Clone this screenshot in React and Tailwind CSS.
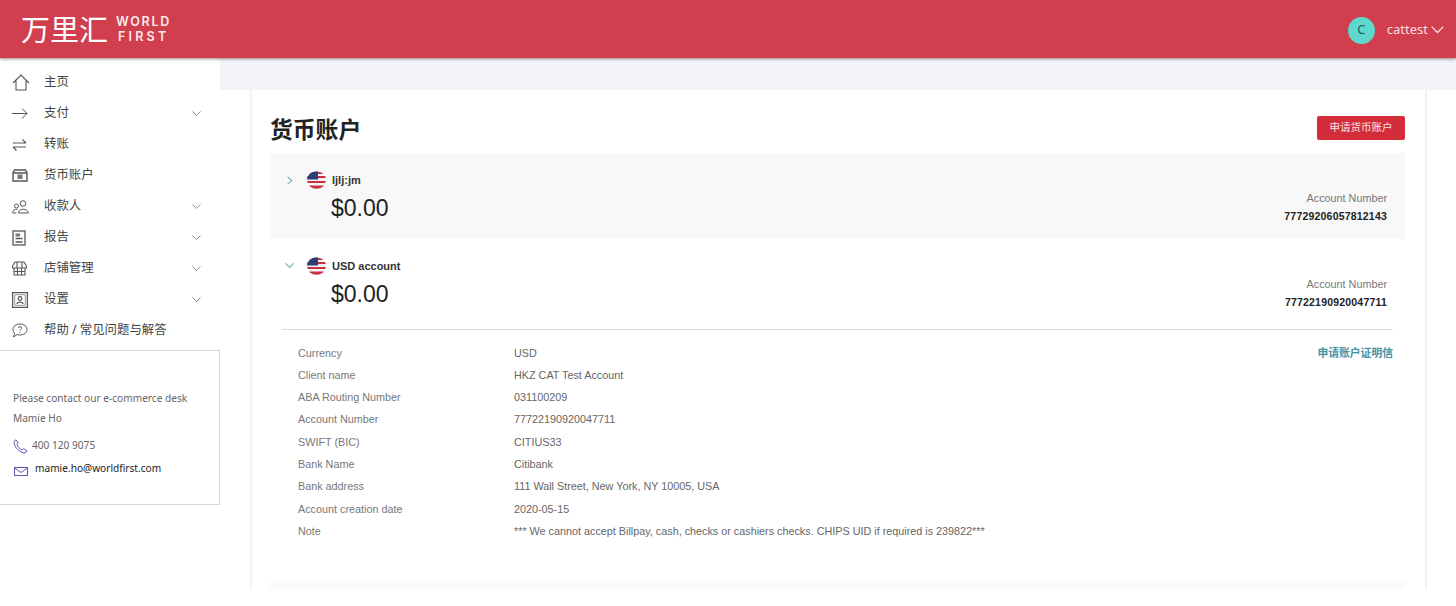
const cjk = "font-['Noto_Sans','Noto_Sans_CJK_SC',sans-serif]";
const arial = "font-['Liberation_Sans','Noto_Sans_CJK_SC',sans-serif]";

function Chevron({ w = 9, color = "#888", width = 1, right }) {
  return (
    <svg width={w} height={right ? w : w * 0.6} viewBox={right ? "0 0 10 10" : "0 0 10 6"} fill="none" stroke={color} strokeWidth={width}>
      <path d={right ? "M3 1 L7.5 5 L3 9" : "M0.5 0.5 L5 5 L9.5 0.5"} />
    </svg>
  );
}

function HomeIcon() {
  return (
    <svg width="18" height="17" viewBox="0 0 18 17" fill="none" stroke="#555" strokeWidth="1.1">
      <path d="M1 9 L9 1 L17 9 M4 7 V16 H14 V7" />
    </svg>
  );
}

function ArrowIcon() {
  return (
    <svg width="16" height="11" viewBox="0 0 16 11" fill="none" stroke="#555" strokeWidth="1">
      <path d="M0 5.5 H15 M10 0.5 L15 5.5 L10 10.5" />
    </svg>
  );
}

function TransferIcon() {
  return (
    <svg width="15" height="12" viewBox="0 0 15 12" fill="none" stroke="#555" strokeWidth="1.1">
      <path d="M1 4 H14 M10.5 0.5 L14 4 M14 8 H1 M4.5 11.5 L1 8" />
    </svg>
  );
}

function WalletIcon() {
  return (
    <svg width="16" height="13" viewBox="0 0 16 13" fill="none" stroke="#555" strokeWidth="1.4">
      <path d="M2.5 1 H13.5 L15 4 V12 H1 V4 Z M1 4 H15" />
      <rect x="5.5" y="5.5" width="5" height="4.5" fill="#777" stroke="none" />
    </svg>
  );
}

function PeopleIcon() {
  return (
    <svg width="17" height="14" viewBox="0 0 17 14" fill="none" stroke="#555" strokeWidth="1">
      <circle cx="11" cy="3.5" r="2.8" />
      <circle cx="4.5" cy="6" r="2" />
      <path d="M6.5 13 C6.5 8 15.8 8 16.3 13 Z" />
      <path d="M4.5 13 H0.7 C0.7 10.5 2.5 9 5.5 9.3" />
    </svg>
  );
}

function ReportIcon() {
  return (
    <svg width="14" height="16" viewBox="0 0 14 16" fill="none" stroke="#555" strokeWidth="1.3">
      <rect x="1" y="1" width="12" height="14" />
      <rect x="3.5" y="3.5" width="4.5" height="3" fill="#777" stroke="none" />
      <path d="M3.5 8.5 H10.5 M3.5 12 H10.5" />
    </svg>
  );
}

function StoreIcon() {
  return (
    <svg width="15" height="15" viewBox="0 0 15 15" fill="none" stroke="#555" strokeWidth="1.1">
      <path d="M3 1 H12 L14.5 5 V7 H0.5 V5 Z M5 1 V7 M10 1 V7 M2 7 V14 H13 V7 M2 10.5 H13 M5.5 7 V14 M9.5 7 V14" />
    </svg>
  );
}

function SettingsIcon() {
  return (
    <svg width="16" height="16" viewBox="0 0 16 16" fill="none" stroke="#555" strokeWidth="1.2">
      <rect x="0.6" y="0.6" width="14.8" height="14.8" />
      <rect x="2.8" y="2.8" width="10.4" height="10.4" strokeWidth="0.6" />
      <circle cx="8" cy="6.5" r="1.8" />
      <path d="M5 12 C5.5 9.5 10.5 9.5 11 12" />
    </svg>
  );
}

function HelpIcon() {
  return (
    <svg width="16" height="15" viewBox="0 0 16 15" fill="none" stroke="#555" strokeWidth="1">
      <path d="M8 1 C12 1 15 3.3 15 6.5 C15 9.7 12 12 8 12 C7 12 6 11.9 5.2 11.5 L1.5 14 L2.6 10.2 C1.6 9.2 1 8 1 6.5 C1 3.3 4 1 8 1 Z" />
      <path d="M6.5 5 C6.5 3.2 9.7 3.2 9.7 5 C9.7 6.2 8 6.2 8 7.6 M8 9 V9.8" />
    </svg>
  );
}

function PhoneIcon() {
  return (
    <svg width="15" height="15" viewBox="0 0 15 15" fill="none" stroke="#6a4fb5" strokeWidth="1">
      <path d="M1 2.5 L3 0.8 L5.2 4 L4 5.5 C4.6 7.5 6.6 9.8 9 11 L10.6 9.6 L14 11.8 L12.4 14 C7 14.2 0.8 8 1 2.5 Z" />
    </svg>
  );
}

function MailIcon() {
  return (
    <svg width="14" height="9" viewBox="0 0 14 9" fill="none" stroke="#6a4fb5" strokeWidth="1">
      <rect x="0.5" y="0.5" width="13" height="8" />
      <path d="M0.5 1 L7 5.5 L13.5 1" />
    </svg>
  );
}

function Flag() {
  return (
    <svg width="19" height="18" viewBox="0 0 19 18">
      <defs>
        <clipPath id="flag-circle">
          <ellipse cx="9.5" cy="9" rx="9.5" ry="8.8" />
        </clipPath>
      </defs>
      <g clipPath="url(#flag-circle)">
        <rect width="19" height="18" fill="#f4f4f6" />
        <rect y="1" width="19" height="2" fill="#c8313e" />
        <rect y="5" width="19" height="2" fill="#c8313e" />
        <rect y="10" width="19" height="2" fill="#c8313e" />
        <rect y="14.5" width="19" height="3.5" fill="#c8313e" />
        <rect width="11" height="8.5" fill="#2c3e78" />
      </g>
    </svg>
  );
}

const menu = [
  { label: "主页", icon: <HomeIcon /> },
  { label: "支付", icon: <ArrowIcon />, more: true },
  { label: "转账", icon: <TransferIcon /> },
  { label: "货币账户", icon: <WalletIcon /> },
  { label: "收款人", icon: <PeopleIcon />, more: true },
  { label: "报告", icon: <ReportIcon />, more: true },
  { label: "店铺管理", icon: <StoreIcon />, more: true },
  { label: "设置", icon: <SettingsIcon />, more: true },
  { label: "帮助 / 常见问题与解答", icon: <HelpIcon /> },
];

const details = [
  ["Currency", "USD"],
  ["Client name", "HKZ CAT Test Account"],
  ["ABA Routing Number", "031100209"],
  ["Account Number", "77722190920047711"],
  ["SWIFT (BIC)", "CITIUS33"],
  ["Bank Name", "Citibank"],
  ["Bank address", "111 Wall Street, New York, NY 10005, USA"],
  ["Account creation date", "2020-05-15"],
  ["Note", "*** We cannot accept Billpay, cash, checks or cashiers checks. CHIPS UID if required is 239822***"],
];

function AccountRow({ name, number, open, shaded }) {
  return (
    <div className={`flex h-[86px] justify-between pl-[13px] pr-[18px] pt-[17px] ${shaded ? "bg-[#f8f8f8]" : ""}`}>
      <div>
        <div className="flex h-[20px] items-center">
          <div className="flex w-[12px] justify-center">
            <Chevron color="#7fb0ba" width={1.3} right={!open} />
          </div>
          <div className="ml-[12px]">
            <Flag />
          </div>
          <span className="ml-[6px] text-[11px] font-bold text-[#333]">{name}</span>
        </div>
        <div className="ml-[48px] mt-[3px] text-[23px] leading-[30px] text-[#222]">$0.00</div>
      </div>
      <div className="pt-[20px] text-right">
        <div className="text-[10.8px] leading-[16px] text-[#777]">Account Number</div>
        <div className="mt-[0.5px] text-[10.5px] font-bold leading-[18px] tracking-[0.2px] text-[#222]">{number}</div>
      </div>
    </div>
  );
}

export default function App() {
  return (
    <div className={`h-[606px] w-[1456px] overflow-hidden bg-white ${arial}`}>
      <header className="relative z-10 flex h-[58px] items-center justify-between bg-[#d13f4e] pl-[21px] pr-[12px] shadow-[0_1px_3px_rgba(90,60,50,0.6)]">
        <div className="flex items-center">
          <span className={`text-[29px] font-normal leading-none text-white ${cjk}`}>万里汇</span>
          <div className="ml-[8px] font-['Inter',sans-serif] text-[12.5px] font-semibold leading-[15.5px] tracking-[1.7px] text-[#fbe9eb]">
            <div>WORLD</div>
            <div className="pl-[2px] tracking-[3.2px]">FIRST</div>
          </div>
        </div>
        <div className="flex items-center pt-[2px]">
          <div className={`flex h-[27px] w-[27px] items-center justify-center rounded-full bg-[#5cd8cc] text-[13px] text-[#1e5c60] ${cjk}`}>C</div>
          <span className={`ml-[12px] text-[13px] text-[#fbdfe2] ${cjk}`}>cattest</span>
          <div className="ml-[3px]">
            <Chevron w={13} color="#fbdfe2" />
          </div>
        </div>
      </header>

      <div className="flex">
        <aside className="w-[220px] shrink-0">
          <nav className="pt-[9px]">
            {menu.map((item) => (
              <div key={item.label} className="flex h-[31px] items-center pl-[12px] pr-[19px]">
                <div className="flex w-[32px] shrink-0 items-center">{item.icon}</div>
                <span className={`flex-1 text-[12.4px] text-[#444] ${cjk}`}>{item.label}</span>
                {item.more && <Chevron />}
              </div>
            ))}
          </nav>
          <div className={`mt-[4px] h-[155px] border-y border-r border-[#d8d8d8] pl-[13px] pt-[37px] text-[10.15px] ${cjk}`}>
            <div className="leading-[20px] text-[#666]">Please contact our e-commerce desk</div>
            <div className="leading-[20px] text-[#666]">Mamie Ho</div>
            <div className="mt-[8px] flex h-[20px] items-center text-[#666]">
              <PhoneIcon />
              <span className="ml-[4px]">400 120 9075</span>
            </div>
            <div className="mt-[3px] flex h-[20px] items-center text-[#222]">
              <div className="ml-[1px] pt-[4px]">
                <MailIcon />
              </div>
              <span className="ml-[7px]">mamie.ho@worldfirst.com</span>
            </div>
          </div>
        </aside>

        <main className="flex-1">
          <div className="h-[32px] bg-[#f2f4f9]" />
          <div className="pl-[30px] pr-[29px]">
            <div className="h-[500px] border-l-2 border-r-2 border-[#f3f3f3] pl-[18px] pr-[20px]">
              <div className="flex h-[63px] items-start justify-between">
                <h1 className={`pt-[23.5px] text-[22.8px] font-bold leading-[32px] text-[#222] ${cjk}`}>货币账户</h1>
                <button className={`mt-[26px] flex h-[24px] w-[88px] items-center justify-center rounded-[2px] bg-[#d22d39] text-[10.5px] text-[#fbe3e5] ${cjk}`}>
                  申请货币账户
                </button>
              </div>
              <AccountRow name="ljlj:jm" number="77729206057812143" shaded />
              <AccountRow name="USD account" number="77722190920047711" open />
              <div className="mx-[12px] mt-[4px] border-t border-[#dcdcdc]" />
              <div className="relative pl-[28px] pt-[11.5px]">
                {details.map(([label, value]) => (
                  <div key={label} className="flex h-[22.3px] items-center text-[10.8px]">
                    <div className="w-[216px] shrink-0 text-[#777]">{label}</div>
                    <div className="text-[#666]">{value}</div>
                  </div>
                ))}
                <span className={`absolute right-[12px] top-[15px] text-[10.8px] font-bold text-[#3f95a6] ${cjk}`}>申请账户证明信</span>
              </div>
              <div className="mt-[38.8px] h-[8px] bg-[#fafafa]" />
            </div>
          </div>
        </main>
      </div>
    </div>
  );
}
